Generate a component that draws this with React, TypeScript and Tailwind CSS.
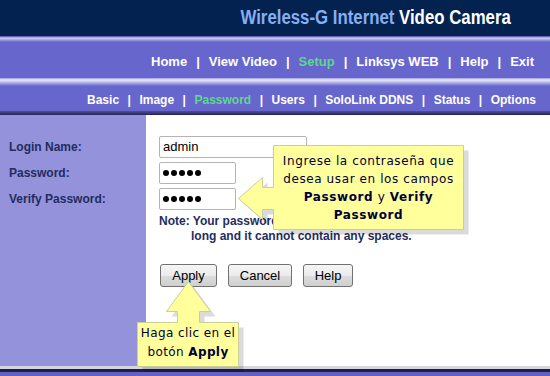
import React from 'react';

const topNav = ['Home', 'View Video', 'Setup', 'Linksys WEB', 'Help', 'Exit'];
const subNav = ['Basic', 'Image', 'Password', 'Users', 'SoloLink DDNS', 'Status', 'Options'];

function NavRow({ items, active }: { items: string[]; active: string }) {
  return (
    <>
      {items.map((item, i) => (
        <React.Fragment key={item}>
          {i > 0 && <span>|</span>}
          <span className={item === active ? 'text-[#5ed88e]' : ''}>{item}</span>
        </React.Fragment>
      ))}
    </>
  );
}

function Dots() {
  return (
    <div className="flex gap-[2px]">
      {[0, 1, 2, 3, 4].map((i) => (
        <span key={i} className="w-[6px] h-[6px] rounded-full bg-black" />
      ))}
    </div>
  );
}

function Button({ label, w }: { label: string; w: string }) {
  return (
    <button
      className={`${w} h-[23px] rounded-[3px] border border-[#707070] bg-[linear-gradient(to_bottom,#f6f6f6_0%,#ebebeb_50%,#dddddd_51%,#cfcfcf_100%)] text-[13px] text-black leading-none`}
    >
      {label}
    </button>
  );
}

export default function App() {
  return (
    <div className="relative w-[550px] h-[376px] overflow-hidden bg-white font-['Liberation_Sans',Arial,sans-serif]">
      {/* Header */}
      <div className="h-[36px] bg-[#03224f] flex justify-end pr-[39px] pt-[7px]">
        <div className="text-[20px] leading-[20px] font-bold whitespace-nowrap scale-x-[0.84] origin-right">
          <span className="text-[#86aef2]">Wireless-G Internet </span>
          <span className="text-white">Video Camera</span>
        </div>
      </div>
      <div className="h-[6px] bg-[linear-gradient(to_bottom,#4646a6_0%,#cfcff2_35%,#6766cc_100%)]" />

      {/* Main menu */}
      <div className="h-[36px] bg-[#6766cc] flex justify-end items-center gap-[9px] pr-[16px] pt-[4px] text-[13px] font-bold text-white">
        <NavRow items={topNav} active="Setup" />
      </div>
      <div className="h-[8px] bg-[linear-gradient(to_bottom,#9a9ae0_0%,#ececf9_25%,#6766cc_100%)]" />

      {/* Sub menu */}
      <div className="h-[25px] bg-[#6766cc] flex justify-end items-center gap-[8.5px] pr-[14px] pt-[2px] text-[12px] font-bold text-white">
        <NavRow items={subNav} active="Password" />
      </div>
      <div className="h-[4px] bg-[linear-gradient(to_bottom,#4f4fa6_0%,#23234c_100%)]" />

      {/* Content */}
      <div className="flex h-[251px]">
        <div className="w-[146px] bg-[#9492da] pt-[21px] pl-[9px] flex flex-col gap-[4px] text-[12px] font-bold text-[#1f2d5e]">
          <div className="h-[22px] flex items-center">Login Name:</div>
          <div className="h-[22px] flex items-center">Password:</div>
          <div className="h-[22px] flex items-center">Verify Password:</div>
        </div>
        <div className="flex-1 pt-[21px] pl-[13px]">
          <div className="flex flex-col gap-[4px]">
            <div className="w-[148px] h-[22px] border border-[#b4b4b8] rounded-[2px] flex items-center pl-[3px] text-[13px] text-black">
              admin
            </div>
            <div className="w-[77px] h-[22px] border border-[#b4b4b8] rounded-[2px] flex items-center pl-[3px]">
              <Dots />
            </div>
            <div className="w-[77px] h-[22px] border border-[#b4b4b8] rounded-[2px] flex items-center pl-[3px]">
              <Dots />
            </div>
          </div>
          <div className="mt-[4px] text-[12px] leading-[15px] font-bold text-[#1f2d5e] whitespace-nowrap">
            <div>Note: Your password must be 1 to 20 characters</div>
            <div className="pl-[32px]">long and it cannot contain any spaces.</div>
          </div>
          <div className="mt-[20px] pl-[1px] flex gap-[11px]">
            <Button label="Apply" w="w-[57px]" />
            <Button label="Cancel" w="w-[64px]" />
            <Button label="Help" w="w-[50px]" />
          </div>
        </div>
      </div>

      {/* Footer */}
      <div className="h-[3px] bg-[#d6d6de]" />
      <div className="h-[3px] bg-[#1e1e4a]" />
      <div className="h-[4px] bg-[#6262c4]" />

      {/* Callouts */}
      <svg className="absolute left-0 top-0 pointer-events-none" width="550" height="376">
        <g transform="translate(5.5,5.5)" fill="rgba(0,0,0,0.14)">
          <polygon points="273,145 463,145 463,229 273,229 273,209 262,209 262,219 238,198 262,177 262,187 273,187" />
          <polygon points="137,322 177,322 177,311 166,311 188,281 210,311 199,311 199,322 238,322 238,366 137,366" />
        </g>
        <g transform="translate(0.5,0.5)" fill="#ffff9c" stroke="#cdcd9a" strokeWidth="1">
          <polygon points="273,145 463,145 463,229 273,229 273,209 262,209 262,219 238,198 262,177 262,187 273,187" />
          <polygon points="137,322 177,322 177,311 166,311 188,281 210,311 199,311 199,322 238,322 238,366 137,366" />
        </g>
      </svg>
      <div className="absolute left-[273px] top-[145px] w-[191px] pt-[7px] text-center text-[12px] leading-[18px] tracking-[0.6px] text-[#000033] font-['DejaVu_Sans',Verdana,sans-serif]">
        Ingrese la contraseña que
        <br />
        desea usar en los campos
        <br />
        <b>Password</b> y <b>Verify</b>
        <br />
        <b>Password</b>
      </div>
      <div className="absolute left-[137px] top-[322px] w-[102px] pt-[2px] text-center text-[12px] leading-[19px] tracking-[0.4px] text-[#000033] font-['DejaVu_Sans',Verdana,sans-serif]">
        Haga clic en el
        <br />
        botón <b>Apply</b>
      </div>
    </div>
  );
}
